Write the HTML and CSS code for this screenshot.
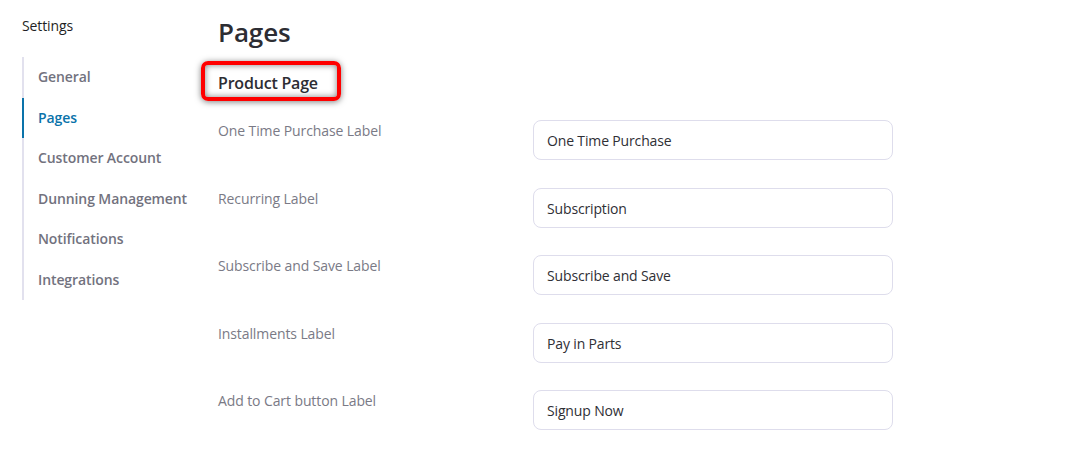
FILE: index.html
```html
<!DOCTYPE html>
<html lang="en">
<head>
<meta charset="utf-8">
<title>Settings - Pages</title>
<link rel="stylesheet" href="styles.css">
</head>
<body>
<div class="layout">
  <aside class="sidebar">
    <div class="sidebar-title">Settings</div>
    <nav class="nav">
      <a class="nav-item">General</a>
      <a class="nav-item active">Pages</a>
      <a class="nav-item">Customer Account</a>
      <a class="nav-item">Dunning Management</a>
      <a class="nav-item">Notifications</a>
      <a class="nav-item">Integrations</a>
    </nav>
  </aside>
  <main class="main">
    <h1 class="page-title">Pages</h1>
    <h2 class="section-title"><span class="highlight"></span>Product Page</h2>
    <div class="form">
      <div class="row">
        <label class="label">One Time Purchase Label</label>
        <div class="field">One Time Purchase</div>
      </div>
      <div class="row">
        <label class="label">Recurring Label</label>
        <div class="field">Subscription</div>
      </div>
      <div class="row">
        <label class="label">Subscribe and Save Label</label>
        <div class="field">Subscribe and Save</div>
      </div>
      <div class="row">
        <label class="label">Installments Label</label>
        <div class="field">Pay in Parts</div>
      </div>
      <div class="row">
        <label class="label">Add to Cart button Label</label>
        <div class="field">Signup Now</div>
      </div>
    </div>
  </main>
</div>
</body>
</html>
```
FILE: styles.css
```css
* { box-sizing: border-box; }
html, body { margin: 0; padding: 0; background: #ffffff; }
body {
  font-family: "Open Sans", "Noto Sans", "Liberation Sans", sans-serif;
  color: #2d2d35;
  width: 1067px;
  height: 456px;
  overflow: hidden;
}
.layout {
  display: flex;
  padding-left: 22px;
}
.sidebar {
  width: 196px;
  flex: none;
}
.sidebar-title {
  font-size: 14px;
  line-height: 20px;
  padding-top: 16px;
  color: #1f1f24;
  letter-spacing: -0.1px;
}
.nav {
  margin-top: 21px;
  border-left: 2px solid #e2e1ee;
  display: flex;
  flex-direction: column;
}
.nav-item {
  display: block;
  height: 40.5px;
  line-height: 39px;
  padding-left: 14px;
  margin-left: -2px;
  border-left: 2px solid transparent;
  font-size: 14px;
  font-weight: 600;
  color: #72727e;
  letter-spacing: -0.1px;
  white-space: nowrap;
}
.nav-item.active {
  color: #0a73aa;
  border-left-color: #0a73aa;
}
.main {
  flex: 1;
}
.page-title {
  margin: 0;
  padding-top: 14px;
  font-size: 26px;
  line-height: 36px;
  font-weight: 600;
  color: #2d2d33;
  letter-spacing: -0.1px;
}
.section-title {
  position: relative;
  margin: 21px 0 0 0;
  font-size: 16px;
  line-height: 24px;
  font-weight: 600;
  color: #2d2d33;
  letter-spacing: -0.2px;
}
.highlight {
  position: absolute;
  left: -17px;
  top: -10px;
  width: 140px;
  height: 40px;
  border: 4px solid #ff0000;
  border-radius: 7px;
  box-shadow: inset 0 0 6px rgba(0,0,0,0.5), 0 1px 6px rgba(0,0,0,0.5);
}
.form {
  margin-top: 25px;
  display: flex;
  flex-direction: column;
  gap: 27.5px;
}
.row {
  display: grid;
  grid-template-columns: 315px 360px;
  align-items: start;
}
.label {
  font-size: 14px;
  line-height: 20px;
  padding-top: 1px;
  color: #7a7a86;
  letter-spacing: -0.1px;
}
.field {
  height: 40px;
  border: 1px solid #deddec;
  border-radius: 8px;
  padding: 1px 13px 0;
  font-size: 14px;
  line-height: 38px;
  color: #2f2f35;
  letter-spacing: -0.15px;
}
```
